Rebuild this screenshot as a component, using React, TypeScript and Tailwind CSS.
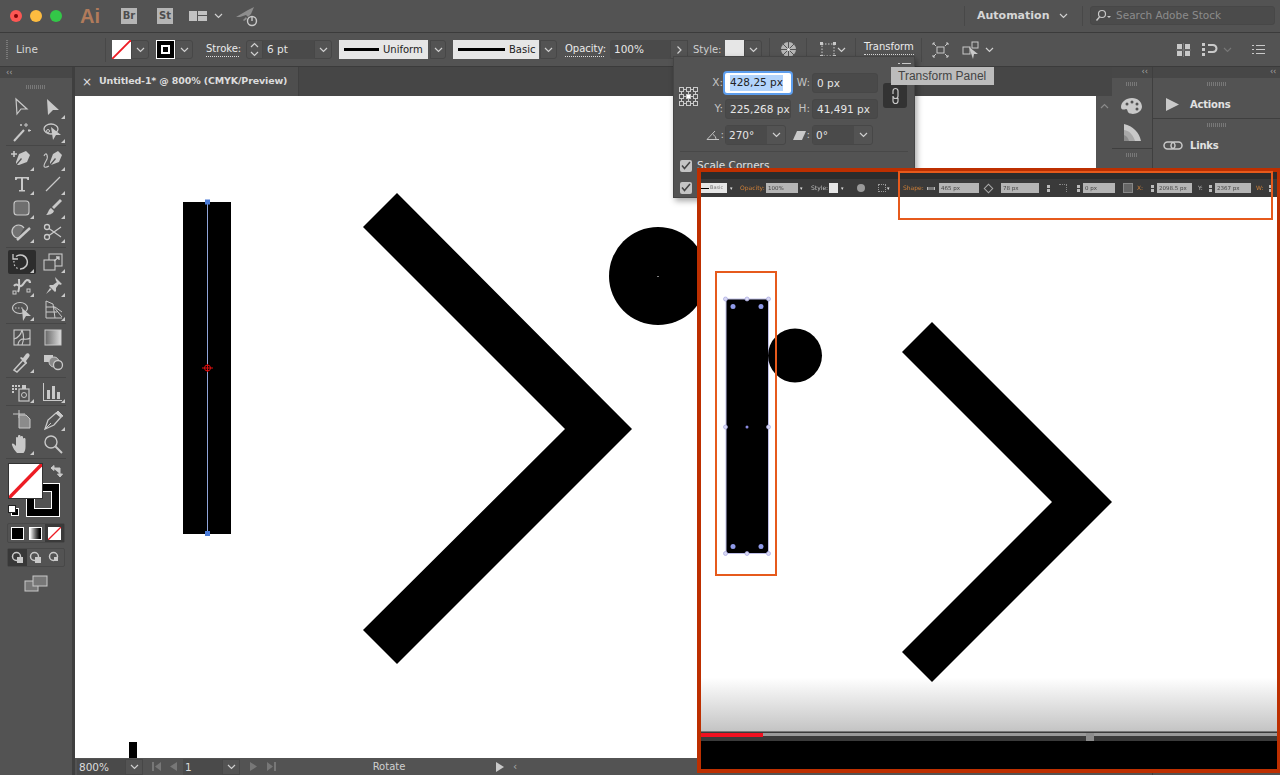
import React from 'react';

const stroke = '#c9c9c9';

const Chev: React.FC<{ c?: string }> = ({ c = '#d0d0d0' }) => (
  <svg width="9" height="6" viewBox="0 0 9 6" className="shrink-0">
    <path d="M1 1l3.5 3.5L8 1" fill="none" stroke={c} strokeWidth="1.2" />
  </svg>
);

const ChevBtn: React.FC<{ w: string }> = ({ w }) => (
  <div className={`${w} h-[19px] shrink-0 flex items-center justify-center rounded-r-[3px] border border-[#474747]`}>
    <Chev />
  </div>
);

const Sep = () => <div className="w-px h-[24px] shrink-0 bg-[#484848]" />;

const Grip: React.FC<{ w?: string }> = ({ w = 'w-[20px]' }) => (
  <div className={`${w} h-[4px] bg-[repeating-linear-gradient(to_right,#787878_0,#787878_1px,transparent_1px,transparent_2px)]`} />
);

const NoneSwatch: React.FC<{ cls: string }> = ({ cls }) => (
  <svg viewBox="0 0 20 20" className={cls} preserveAspectRatio="none">
    <rect width="20" height="20" fill="#fff" />
    <path d="M0 20L20 0" stroke="#ed1c24" strokeWidth="2" />
  </svg>
);

const PanelMenu = () => (
  <svg width="13" height="9" viewBox="0 0 13 9" className="block">
    <path d="M0 .5h2M4 .5h9M0 4.5h2M4 4.5h9M0 8.5h2M4 8.5h9" stroke="#c9c9c9" />
  </svg>
);

const tools: React.ReactNode[][][] = [
  [
    [
      <path d="M6 3l11 10h-6l-4 5z" fill="none" stroke={stroke} strokeWidth="1.2" />,
      <path d="M6 3l12 11h-6l-5 5z" fill={stroke} />,
    ],
    [
      <g stroke={stroke} fill="none"><path d="M4 21L14 10" strokeWidth="2" /><path d="M16 3v4M14 5h4M19 9v3M18 10.5h3M11 4v2M10 5h2" strokeWidth="1" /></g>,
      <g stroke={stroke} fill="none"><ellipse cx="10" cy="9" rx="7" ry="5" strokeWidth="1.3" /><circle cx="7" cy="11" r="1.5" /><path d="M10 7l10 8h-5l-3 5z" fill={stroke} stroke="none" /></g>,
    ],
  ],
  [
    [
      <g><path d="M1 6h6M4 3v6" stroke={stroke} strokeWidth="1.6" /><path d="M16 3l4 4-3 7-8 3-2 0 5-6-1-1-5 6 0-2 3-8z" fill={stroke} /></g>,
      <g><path d="M3 8c2-5 5 0 2 5s-3 8 3 5" fill="none" stroke={stroke} strokeWidth="1.1" /><path d="M17 3l4 4-3 7-8 3 5-6-1-1-5 6 0-2 3-8z" fill={stroke} /></g>,
    ],
    [
      <path d="M5 5h14v3h-1.5l-1-1.5H13V18h2v1.5H9V18h2V6.5H7.5l-1 1.5H5z" fill={stroke} />,
      <path d="M5 19L19 5" stroke={stroke} strokeWidth="1.3" />,
    ],
    [
      <rect x="4" y="5" width="15" height="14" rx="3" fill="#6f6f6f" stroke={stroke} strokeWidth="1.1" />,
      <g><path d="M19 3l2 2-8 8-2-2z" fill={stroke} /><path d="M10 12l3 3c-1 3-5 4-8 4 2-1 2-5 5-7z" fill={stroke} /></g>,
    ],
    [
      <g><path d="M8 18a6.5 6.5 0 1 1 6-10" fill="#727272" stroke={stroke} strokeWidth="1.2" /><path d="M7 20L20 8" stroke={stroke} strokeWidth="2.4" /></g>,
      <g fill="none" stroke={stroke} strokeWidth="1.3"><circle cx="6" cy="7" r="2.5" /><circle cx="6" cy="17" r="2.5" /><path d="M8 8.5L20 17M8 15.5L20 7" /></g>,
    ],
  ],
  [
    [
      <g fill="none" stroke={stroke}><path d="M6 6.5A7 7 0 1 1 10 19" strokeWidth="1.5" /><path d="M3 4v5h5" strokeWidth="1.3" /><path d="M4 11a7 7 0 0 0 5 8" strokeWidth="1.2" strokeDasharray="1.5 2" /></g>,
      <g fill="none" stroke={stroke} strokeWidth="1.1"><rect x="8" y="4" width="13" height="12" /><rect x="3" y="10" width="11" height="10" fill="#535353" /><path d="M13 11l5-4M15 7h3v3" strokeWidth="1.3" /></g>,
    ],
    [
      <g fill="none" stroke={stroke}><path d="M4 12c3-4 4 1 7 0s3-5 6-6c2 0 3 1 3 3" strokeWidth="2.2" /><path d="M9 5c0 5 1 9-1 13" strokeWidth="2" /><rect x="3" y="17" width="3" height="3" strokeWidth="1" /><rect x="17" y="15" width="3" height="3" strokeWidth="1" /></g>,
      <g fill={stroke}><path d="M14 3l7 7-2 1-1-1-3 4 0 3-1 1-6-6 1-1h3l4-3-1-1z" /><path d="M9 14l1.5 1.5L5 20z" /></g>,
    ],
    [
      <g><ellipse cx="10" cy="10" rx="7.5" ry="5.5" fill="none" stroke={stroke} strokeWidth="1.2" /><path d="M5 10h8" stroke={stroke} strokeDasharray="1.5 1.5" /><path d="M12 10l9 8h-5l-3 5z" fill={stroke} /></g>,
      <g fill="none" stroke={stroke} strokeWidth="1"><path d="M5 3v17h16M5 3l7 3 2 14M5 9h9l7 5M5 14h11" /><path d="M12 8l9 11" /></g>,
    ],
  ],
  [
    [
      <g fill="none" stroke={stroke} strokeWidth="1.1"><rect x="4" y="4" width="16" height="15" /><path d="M4 13c4-1 7-5 8-9M12 4c2 5 2 10 0 15M8 19c0-3 2-5 4-6 3 0 6 1 8-1" /></g>,
      <rect x="4" y="4" width="16" height="15" fill="url(#toolgrad)" stroke={stroke} strokeWidth="1" />,
    ],
    [
      <g><path d="M4 21l9-10 3 3-9 9z" fill="none" stroke={stroke} strokeWidth="1.5" transform="translate(0 -1)" /><path d="M13 8l3-4c2-2 5 1 3 3l-3 4 1 2-1 1-6-6 1-1z" fill={stroke} /></g>,
      <g><rect x="3" y="5" width="9" height="7" fill={stroke} /><circle cx="13" cy="12" r="5" fill="#8a8a8a" stroke={stroke} /><circle cx="17" cy="15" r="4.5" fill="#535353" stroke={stroke} strokeWidth="1.3" /></g>,
    ],
  ],
  [
    [
      <g fill={stroke}><path d="M2 5h2v2H2zM5 5h2v2H5zM8 5h2v2H8zM2 8h2v2H2zM5 8h2v2H5zM2 11h2v2H2z" /><rect x="9" y="9" width="10" height="12" fill="none" stroke={stroke} strokeWidth="1.2" /><circle cx="14" cy="15" r="2.5" fill="none" stroke={stroke} /><rect x="12" y="5" width="4" height="4" /></g>,
      <g fill={stroke}><path d="M3 3v17h18v1H2V3z" /><rect x="6" y="10" width="3" height="9" /><rect x="11" y="6" width="3" height="13" /><rect x="16" y="12" width="3" height="7" /></g>,
    ],
  ],
  [
    [
      <g><path d="M9 2v8M3 6h12" stroke={stroke} fill="none" /><path d="M9 7h7l4 4v9H9z" fill="#8b8b8b" stroke={stroke} /></g>,
      <g fill="none" stroke={stroke}><path d="M4 21l3-9 8-7 5 4-7 8z" strokeWidth="1.3" /><path d="M15 5l2-2 5 5-2 1z" fill={stroke} /><path d="M4 21l6-6" /></g>,
    ],
    [
      <path d="M7 21c-2-2-4-5-5-8-.5-1.5 1-2 2-1l2 2V6c0-1.5 2-1.5 2 0v4V4c0-1.5 2.5-1.5 2.5 0v6V5c0-1.5 2.5-1.5 2.5 0v6V7c0-1.5 2.5-1.5 2.5 0v8c0 3-1 5-2 6z" fill={stroke} />,
      <g fill="none" stroke={stroke}><circle cx="10" cy="10" r="6" strokeWidth="1.4" /><path d="M14.5 14.5L21 21" strokeWidth="2" /></g>,
    ],
  ],
];

// tools without the little flyout corner
const noFlag = ['0-0-0', '0-1-0', '3-0-0', '3-0-1', '3-1-1', '5-0-0', '5-1-1'];

const Tool: React.FC<{ children: React.ReactNode; active?: boolean; flag?: boolean }> = ({ children, active, flag = true }) => (
  <div className={`w-[28px] h-[24px] mx-auto flex items-center justify-center rounded-[2px] ${active ? 'bg-[#2d2d2d]' : ''}`}>
    <svg width="24" height="24" viewBox="0 0 24 24">
      {children}
      {flag && <path d="M24 23h-4l4-4z" fill={stroke} />}
    </svg>
  </div>
);

const seps = ['mt-px mb-[2px]', 'mt-[3px] mb-[2px]', 'mt-px mb-[2px]', 'mt-[3px] mb-[2px]', 'mt-px mb-[2px]', 'mt-[2px]'];

const Toolbar = () => (
  <div className="w-[75px] shrink-0 flex flex-col border-r-[3px] border-[#3f3f3f] bg-[#535353]">
    <div className="h-[11px] flex items-center pl-[6px] bg-[#474747] text-[8px] leading-none text-[#aaa]">‹‹</div>
    <div className="h-[18px] flex items-center justify-center"><Grip /></div>
    {tools.map((group, i) => (
      <React.Fragment key={i}>
        {group.map((row, j) => (
          <div key={j} className="grid grid-cols-[31px_31px] pl-[6px]">
            {row.map((t, k) => (
              <Tool key={k} active={i === 2 && j === 0 && k === 0} flag={!noFlag.includes(`${i}-${j}-${k}`)}>{t}</Tool>
            ))}
          </div>
        ))}
        <div className={`${seps[i]} h-px mx-[6px] bg-[#464646]`} />
      </React.Fragment>
    ))}

    <div className="relative h-[55px] mt-[4px] shrink-0">
      <div className="absolute left-[26px] top-[20px] w-[34px] h-[34px] bg-black border border-white p-[7px]">
        <div className="w-full h-full bg-[#535353] border border-white" />
      </div>
      <NoneSwatch cls="absolute left-[8px] top-0 w-[35px] h-[36px] border border-[#333]" />
      <svg className="absolute left-[50px] top-[1px]" width="14" height="14" viewBox="0 0 14 14">
        <path d="M3 4h7v6M1 4l3-2.5v5zM10 13l-2.5-3h5z" fill={stroke} stroke={stroke} strokeWidth="1" />
      </svg>
      <div className="absolute left-[11px] top-[45px] w-[8px] h-[8px] bg-black border border-white" />
      <div className="absolute left-[8px] top-[42px] w-[8px] h-[8px] bg-white border border-[#222]" />
    </div>

    <div className="mt-[5px] mx-[7px] h-[20px] grid grid-cols-3 rounded-[2px] border border-[#484848]">
      <div className="flex items-center justify-center"><div className="w-[13px] h-[13px] bg-black border border-white" /></div>
      <div className="flex items-center justify-center"><div className="w-[13px] h-[13px] bg-linear-to-r from-white to-black border border-white" /></div>
      <div className="flex items-center justify-center bg-[#3a3a3a]"><NoneSwatch cls="w-[13px] h-[13px]" /></div>
    </div>

    <div className="mt-[5px] mx-[7px] h-[19px] grid grid-cols-3 rounded-[2px] border border-[#484848]">
      {[0, 1, 2].map(i => (
        <div key={i} className={`flex items-center justify-center ${i === 0 ? 'bg-[#383838]' : ''}`}>
          <svg width="13" height="13" viewBox="0 0 13 13">
            <circle cx="5.5" cy="5.5" r="4" fill="none" stroke={stroke} strokeWidth="1.5" />
            <rect x="6" y="6" width={i === 2 ? 4 : 6} height={i === 2 ? 4 : 6} fill={stroke} />
          </svg>
        </div>
      ))}
    </div>

    <div className="mt-[8px] flex justify-center">
      <svg width="24" height="17" viewBox="0 0 24 17">
        <rect x="1" y="6" width="13" height="10" fill="#777" stroke={stroke} />
        <rect x="9" y="1" width="14" height="10" fill="#777" stroke={stroke} />
      </svg>
    </div>
  </div>
);

const TitleBar = () => (
  <div className="h-[33px] shrink-0 flex items-center border-b border-[#3b3b3b] bg-[#535353] pb-px">
    <div className="ml-[10px] w-[12px] h-[12px] rounded-full bg-[#fc5753] flex items-center justify-center"><div className="w-[4px] h-[4px] rounded-full bg-[#7e0508]" /></div>
    <div className="ml-[8px] w-[12px] h-[12px] rounded-full bg-[#fdbc40]" />
    <div className="ml-[8px] w-[12px] h-[12px] rounded-full bg-[#33c748]" />
    <span className="ml-[18px] w-[22px] text-[20px] leading-none font-bold text-[#b17b5b] font-['Liberation_Sans',sans-serif]">Ai</span>
    <div className="ml-[19px] w-[16px] h-[16px] bg-[#b5b5b5] text-[#4d4d4d] text-[10px] font-bold flex items-center justify-center">Br</div>
    <div className="ml-[20px] w-[16px] h-[16px] bg-[#b5b5b5] text-[#4d4d4d] text-[10px] font-bold flex items-center justify-center">St</div>
    <svg className="ml-[16px]" width="18" height="12" viewBox="0 0 18 12"><path d="M0 1h8v10H0zM9 1h9v4H9zM9 6h9v5H9z" fill="#c2c2c2" /></svg>
    <div className="ml-[7px]"><Chev /></div>
    <svg className="ml-[12px]" width="24" height="24" viewBox="0 0 24 24">
      <path d="M1 13L13 6l6-3-3 7-3 3-2-2-3 1-3 1zM8 16l3-3 1 2-3 2z" fill="#8d8d8d" />
      <circle cx="17" cy="17" r="4.5" fill="#535353" stroke="#c9c9c9" strokeWidth="1.4" />
      <path d="M17 12v5" stroke="#c9c9c9" strokeWidth="1.4" />
    </svg>
    <div className="ml-auto w-px h-[20px] bg-[#484848]" />
    <span className="ml-[12px] mt-px w-[73px] text-[11px] font-bold text-[#d6d6d6] whitespace-nowrap">Automation</span>
    <div className="ml-[9px]"><Chev /></div>
    <div className="ml-[14px] w-px h-[20px] bg-[#484848]" />
    <div className="ml-[7px] mr-[5px] w-[185px] h-[19px] flex items-center rounded-[3px] border border-[#474747] bg-[#4b4b4b] pl-[4px]">
      <svg width="17" height="13" viewBox="0 0 17 13"><circle cx="7" cy="5" r="3.5" fill="none" stroke="#c9c9c9" strokeWidth="1.2" /><path d="M4.5 8L1.5 11.5" stroke="#c9c9c9" strokeWidth="1.4" /><path d="M12 7h4l-2 2z" fill="#c9c9c9" /></svg>
      <span className="ml-[4px] text-[10.5px] text-[#8b8b8b] whitespace-nowrap">Search Adobe Stock</span>
    </div>
  </div>
);

const OptionLabel: React.FC<{ w: string; ml: string; children: React.ReactNode }> = ({ w, ml, children }) => (
  <span className={`${w} ${ml} shrink-0 text-[10px] leading-[14px] text-[#ececec] whitespace-nowrap border-b border-dotted border-[#dcdcdc]`}>{children}</span>
);

const OptionsBar = () => (
  <div className="h-[34px] shrink-0 flex items-center border-b border-[#3b3b3b] bg-[#535353]">
    <div className="ml-[6px] w-[2px] h-[20px] bg-[repeating-linear-gradient(to_bottom,#7a7a7a_0,#7a7a7a_1px,transparent_1px,transparent_2px)]" />
    <span className="ml-[8px] w-[89px] text-[10.5px] text-[#d6d6d6]">Line</span>
    <Sep />
    <NoneSwatch cls="ml-[6px] w-[19px] h-[19px] shrink-0" />
    <ChevBtn w="w-[18px]" />
    <div className="ml-[7px] w-[19px] h-[19px] shrink-0 bg-black border border-white flex items-center justify-center">
      <div className="w-[9px] h-[9px] border-2 border-white flex" />
    </div>
    <ChevBtn w="w-[18px]" />
    <OptionLabel w="w-[33px]" ml="ml-[13px]">Stroke:</OptionLabel>
    <div className="ml-[7px] w-[17px] h-[19px] shrink-0 flex flex-col items-center justify-center gap-[3px] rounded-l-[3px] border border-[#474747]">
      <div className="rotate-180"><Chev /></div>
      <Chev />
    </div>
    <div className="w-[51px] h-[19px] shrink-0 bg-[#4a4a4a] text-[10.5px] leading-[18px] pl-[4px] text-[#e6e6e6]">6 pt</div>
    <ChevBtn w="w-[18px]" />
    <div className="ml-[7px] w-[89px] h-[19px] shrink-0 bg-[#e6e6e6] flex items-center pl-[5px] gap-[4px] text-[10px] text-[#222]">
      <div className="w-[35px] h-[3px] bg-black" />Uniform
    </div>
    <div className="ml-[2px]"><ChevBtn w="w-[16px]" /></div>
    <div className="ml-[7px] w-[86px] h-[19px] shrink-0 bg-[#e6e6e6] flex items-center pl-[5px] gap-[4px] text-[10px] text-[#222]">
      <div className="w-[47px] h-[3px] bg-black" />Basic
    </div>
    <div className="ml-px"><ChevBtn w="w-[17px]" /></div>
    <OptionLabel w="w-[39px]" ml="ml-[8px]">Opacity:</OptionLabel>
    <div className="ml-[6px] w-[60px] h-[19px] shrink-0 rounded-l-[3px] bg-[#4a4a4a] text-[10.5px] leading-[18px] pl-[4px] text-[#e6e6e6]">100%</div>
    <div className="w-[18px] h-[19px] shrink-0 flex items-center justify-center border border-[#474747]"><div className="-rotate-90"><Chev /></div></div>
    <span className="ml-[5px] w-[25px] shrink-0 text-[10px] text-[#cfcfcf]">Style:</span>
    <div className="ml-[7px] w-[19px] h-[19px] shrink-0 bg-[#e6e6e6]" />
    <ChevBtn w="w-[18px]" />
    <div className="ml-[7px]"><Sep /></div>
    <svg className="ml-[10px] shrink-0" width="17" height="17" viewBox="0 0 17 17">
      <circle cx="8.5" cy="8.5" r="7.5" fill="#b5b5b5" />
      <path d="M8.5 1v15M1 8.5h15M3 3l11 11M14 3L3 14" stroke="#535353" />
      <circle cx="8.5" cy="8.5" r="1.5" fill="#e8e8e8" />
    </svg>
    <div className="ml-[9px]"><Sep /></div>
    <svg className="ml-[13px] shrink-0" width="16" height="16" viewBox="0 0 16 16">
      <rect x="2" y="2" width="12" height="12" fill="none" stroke="#c9c9c9" strokeDasharray="1.5 1.5" />
      <path d="M0 0h3v3H0zM13 0h3v3h-3zM0 13h3v3H0zM13 13h3v3h-3z" fill="#c9c9c9" />
    </svg>
    <div className="ml-px w-[9px]"><Chev /></div>
    <div className="ml-[9px]"><Sep /></div>
    <OptionLabel w="w-[50px]" ml="ml-[8px] mb-[4px]">Transform</OptionLabel>
    <div className="ml-[7px]"><Sep /></div>
    <svg className="ml-[10px] shrink-0" width="17" height="16" viewBox="0 0 17 16">
      <rect x="5" y="5" width="7" height="6" fill="none" stroke="#c9c9c9" />
      <path d="M1 1l3 3M16 1l-3 3M1 15l3-3M16 15l-3-3M1 3V1h2M16 3V1h-2M1 13v2h2M16 13v2h-2" fill="none" stroke="#c9c9c9" />
    </svg>
    <svg className="ml-[13px] shrink-0" width="18" height="18" viewBox="0 0 18 18">
      <rect x="1" y="6" width="7" height="7" fill="none" stroke="#c9c9c9" />
      <rect x="10" y="1" width="6" height="6" fill="none" stroke="#c9c9c9" />
      <path d="M7 6l9 7h-4l-1 5z" fill="#c9c9c9" />
    </svg>
    <div className="ml-[5px] w-[9px]"><Chev /></div>

    <svg className="ml-auto shrink-0" width="15" height="14" viewBox="0 0 15 14"><path d="M1 1h5v5H1zM9 1h5v5H9zM1 8h5v5H1zM9 8h5v5H9z" fill="#c9c9c9" /><path d="M7.5 0v14M0 7h15" stroke="#777" /></svg>
    <svg className="ml-[11px] shrink-0" width="16" height="14" viewBox="0 0 16 14"><path d="M0 0h3v3H0zM0 5h3v3H0zM0 10h3v3H0z" fill="#c9c9c9" /><path d="M6 2h5a3 3 0 0 1 0 7H6" fill="none" stroke="#c9c9c9" strokeWidth="2" /></svg>
    <div className="ml-[5px] w-[9px]"><Chev c="#777" /></div>
    <div className="ml-[20px] mr-[15px] w-[13px]"><PanelMenu /></div>
  </div>
);

const TabStrip = () => (
  <div className="h-[29px] shrink-0 flex bg-[#464646]">
    <div className="w-[224px] flex items-center bg-[#4e4e4e] border-r border-[#404040] pl-[7px]">
      <span className="w-[17px] text-[12px] leading-none text-[#e0e0e0]">×</span>
      <span className="text-[9.5px] font-bold tracking-[-0.15px] text-[#dcdcdc] whitespace-nowrap">Untitled-1* @ 800% (CMYK/Preview)</span>
    </div>
  </div>
);

const Canvas = () => (
  <div className="flex-1 flex min-h-0">
    <div className="w-[1021px] bg-white">
      <svg width="1021" height="662" viewBox="75 96 1021 662" className="block">
        <defs>
          <linearGradient id="toolgrad" x1="0" x2="1" y1="0" y2="0"><stop offset="0" stopColor="#666" /><stop offset="1" stopColor="#ddd" /></linearGradient>
        </defs>
        <rect x="183" y="202" width="48" height="332" fill="#000" />
        <path d="M207.5 202v332" stroke="#8fa4d8" strokeWidth="1" />
        <rect x="205" y="199.5" width="5" height="5" fill="#4a7bd8" />
        <rect x="205" y="531" width="5" height="5" fill="#4a7bd8" />
        <g stroke="#e01010" fill="none">
          <path d="M202 368h11M207.5 364v8" />
          <circle cx="207.5" cy="368" r="3" />
        </g>
        <path d="M397 193L632 429 397 664 363 630 565 429 363 227z" fill="#000" />
        <circle cx="658" cy="276" r="49" fill="#000" />
        <rect x="657.5" y="276" width="1" height="1" fill="#fff" />
        <rect x="129" y="742" width="8" height="16" fill="#000" />
      </svg>
    </div>
    <div className="w-[16px] bg-[#535353] flex justify-center pt-[7px]">
      <div className="rotate-180 h-fit"><Chev c="#8a8a8a" /></div>
    </div>
  </div>
);

const StatusBar = () => (
  <div className="h-[17px] shrink-0 flex items-center bg-[#535353] text-[10.5px] text-[#dcdcdc]">
    <div className="ml-[2px] w-[48px] h-[16px] bg-[#4a4a4a] pl-[2px] leading-[16px]">800%</div>
    <div className="w-[18px] h-[16px] flex items-center justify-center border border-[#474747]"><Chev /></div>
    <svg className="ml-[9px]" width="27" height="9" viewBox="0 0 27 9"><path d="M0 0h2v9H0zM9 0v9L3 4.5zM25 0v9l-7-4.5z" fill="#777" /></svg>
    <div className="ml-[4px] w-[39px] h-[16px] bg-[#4a4a4a] pl-[2px] leading-[16px]">1</div>
    <div className="w-[18px] h-[16px] flex items-center justify-center border border-[#474747]"><Chev /></div>
    <svg className="ml-[10px]" width="26" height="9" viewBox="0 0 26 9"><path d="M0 0v9l7-4.5zM17 0v9l6-4.5zM24 0h2v9h-2z" fill="#777" /></svg>
    <span className="ml-[14px] w-[198px] text-center text-[10px] text-[#cfcfcf]">Rotate</span>
    <svg className="ml-[8px]" width="8" height="10" viewBox="0 0 8 10"><path d="M0 0v10l8-5z" fill="#c9c9c9" /></svg>
    <span className="ml-[9px] text-[#aaa]">‹</span>
  </div>
);

const Docks = () => (
  <div className="flex-1 flex bg-[#535353]">
    <div className="w-[41px] shrink-0 flex flex-col border-r border-[#3f3f3f]">
      <div className="h-[11px] bg-[#474747] text-[8px] leading-[10px] text-right pr-[4px] text-[#aaa]">‹‹</div>
      <div className="h-[12px] flex items-center justify-center"><Grip w="w-[12px]" /></div>
      <div className="flex flex-col items-center gap-[9px] pt-[7px] pb-[6px] border-b border-[#3f3f3f]">
        <svg width="22" height="18" viewBox="0 0 22 18"><path d="M11 1C5 1 0 5 0 10c0 3 3 3 5 2 2 0 1 3 3 4 3 2 12 1 13-6 0-5-4-9-10-9z" fill="#c9c9c9" /><circle cx="6" cy="7" r="1.5" fill="#535353" /><circle cx="11" cy="5" r="1.5" fill="#535353" /><circle cx="16" cy="7" r="1.5" fill="#535353" /><circle cx="16" cy="12" r="1.5" fill="#535353" /></svg>
        <svg width="18" height="18" viewBox="0 0 18 18"><path d="M1 0c9 2 15 8 17 17H1z" fill="#c9c9c9" /><path d="M1 6c6 1 9 5 11 11H1z" fill="#a8a8a8" /><path d="M1 11c3 1 4 3 5 6H1z" fill="#8b8b8b" /></svg>
      </div>
      <div className="h-[12px] flex items-center justify-center"><Grip w="w-[12px]" /></div>
    </div>
    <div className="flex-1 flex flex-col text-[10px] font-bold tracking-[-0.2px] text-[#e2e2e2]">
      <div className="h-[11px] bg-[#474747] text-[8px] font-normal leading-[10px] text-right pr-[4px] text-[#aaa]">‹‹</div>
      <div className="h-[12px] flex items-center justify-center"><Grip w="w-[20px]" /></div>
      <div className="h-[29px] flex items-center pl-[13px] gap-[11px] border-b border-[#3f3f3f]">
        <svg width="13" height="13" viewBox="0 0 13 13"><path d="M0 0v13l13-6.5z" fill="#c9c9c9" /></svg>Actions
      </div>
      <div className="h-[12px] flex items-center justify-center"><Grip w="w-[20px]" /></div>
      <div className="h-[29px] flex items-center pl-[10px] gap-[7px]">
        <svg width="20" height="9" viewBox="0 0 20 9"><rect x="1" y="1" width="11" height="7" rx="3.5" fill="none" stroke="#c9c9c9" strokeWidth="1.5" /><rect x="8" y="1" width="11" height="7" rx="3.5" fill="none" stroke="#c9c9c9" strokeWidth="1.5" /></svg>Links
      </div>
    </div>
  </div>
);

const Input: React.FC<{ children: React.ReactNode; selected?: boolean }> = ({ children, selected }) => (
  selected ? (
    <div className="w-[66px] h-[20px] shrink-0 rounded-[2px] bg-white ring-2 ring-[#5c9ded] pl-[5px] flex items-center text-[10.5px] text-[#222]">
      <span className="bg-[#b3d4fc] whitespace-nowrap">{children}</span>
    </div>
  ) : (
    <div className="w-[66px] h-[20px] shrink-0 rounded-[3px] border border-[#474747] bg-[#4a4a4a] pl-[4px] leading-[18px] text-[10.5px] text-[#e6e6e6] whitespace-nowrap">{children}</div>
  )
);

const Drop: React.FC<{ children: React.ReactNode }> = ({ children }) => (
  <div className="w-[61px] h-[20px] shrink-0 flex rounded-[3px] border border-[#474747] text-[10.5px] text-[#e6e6e6]">
    <div className="flex-1 bg-[#4a4a4a] pl-[3px] leading-[18px]">{children}</div>
    <div className="w-[18px] flex items-center justify-center"><Chev /></div>
  </div>
);

const Check = () => (
  <div className="w-[12px] h-[12px] shrink-0 rounded-[2px] bg-[#c4c4c4] flex items-center justify-center">
    <svg width="10" height="9" viewBox="0 0 10 9"><path d="M1 4.5L3.5 7.5 9 1" fill="none" stroke="#444" strokeWidth="1.5" /></svg>
  </div>
);

const FLabel: React.FC<{ w: string; children: React.ReactNode }> = ({ w, children }) => (
  <span className={`${w} shrink-0 text-right pr-[2px] text-[10.5px] text-[#c4c4c4]`}>{children}</span>
);

const TransformPanel = () => (
  <div className="absolute left-[673px] top-[56px] w-[242px] h-[142px] bg-[#535353] border border-[#454545] shadow-[2px_3px_6px_rgba(0,0,0,0.35)]">
    <div className="flex justify-end pr-[3px] pt-[6px] h-[16px]"><PanelMenu /></div>
    <div className="flex">
      <div className="w-[36px] pl-[5px] pt-[14px] shrink-0">
        <svg width="19" height="19" viewBox="0 0 19 19" className="block">
          {[0, 7, 14].flatMap(y => [0, 7, 14].map(x => (
            <rect key={`${x}-${y}`} x={x + 0.5} y={y + 0.5} width="4" height="4" fill={x === 7 && y === 7 ? '#fff' : 'none'} stroke="#c9c9c9" />
          )))}
          <path d="M5 2.5h2M12 2.5h2M5 9.5h2M12 9.5h2M5 16.5h2M12 16.5h2M2.5 5v2M2.5 12v2M9.5 5v2M9.5 12v2M16.5 5v2M16.5 12v2" stroke="#c9c9c9" />
        </svg>
      </div>
      <div className="flex flex-col gap-[6px] shrink-0">
        <div className="flex items-center"><FLabel w="w-[15px]">X:</FLabel><Input selected>428,25 px</Input><FLabel w="w-[21px]">W:</FLabel><Input>0 px</Input></div>
        <div className="flex items-center"><FLabel w="w-[15px]">Y:</FLabel><Input>225,268 px</Input><FLabel w="w-[21px]">H:</FLabel><Input>41,491 px</Input></div>
        <div className="flex items-center">
          <div className="w-[15px] shrink-0 flex justify-end pr-[1px] items-center text-[10.5px] text-[#c4c4c4]">
            <svg className="shrink-0 -ml-[3px]" width="14" height="10" viewBox="0 0 14 10"><path d="M1 9.5h12M1 9.5L9 1M7 4.5c2 1 3 3 3 5" fill="none" stroke="#c4c4c4" /></svg>:
          </div>
          <Drop>270°</Drop>
          <div className="w-[26px] shrink-0 flex justify-end pr-[2px] items-center text-[10.5px] text-[#c4c4c4]">
            <svg width="13" height="9" viewBox="0 0 13 9"><path d="M0 9h9l4-9H4z" fill="#c9c9c9" /></svg>:
          </div>
          <Drop>0°</Drop>
        </div>
      </div>
      <div className="ml-[5px] mt-[10px] w-[24px] h-[25px] shrink-0 rounded-[3px] bg-[#333] flex items-center justify-center">
        <svg width="9" height="18" viewBox="0 0 9 18"><path d="M2 7V4a2.5 2.5 0 0 1 5 0v5a2.5 2.5 0 0 1-5 0M7 11v3a2.5 2.5 0 0 1-5 0V9" fill="none" stroke="#c9c9c9" strokeWidth="1.2" /></svg>
      </div>
    </div>
    <div className="mx-[6px] mt-[6px] h-px bg-[#484848]" />
    <div className="pl-[6px] pt-[6px] flex items-center gap-[5px] text-[10.5px] text-[#e0e0e0]"><Check />Scale Corners</div>
    <div className="pl-[6px] pt-[8px]"><Check /></div>
  </div>
);

const MiniChev = () => <span className="block w-[5px] text-[5px] leading-none text-[#ddd]">▾</span>;
const MiniStep = () => (
  <div className="w-[3px] shrink-0 flex flex-col gap-px">
    <div className="w-[3px] h-[3px] bg-[#bbb]" />
    <div className="w-[3px] h-[3px] bg-[#bbb]" />
  </div>
);
const MiniInput: React.FC<{ w: string; ml: string; children: React.ReactNode }> = ({ w, ml, children }) => (
  <div className={`${w} ${ml} shrink-0 h-[10px] bg-[#b5b5b5] pl-[2px] text-[5.5px] leading-[10px] text-[#444] whitespace-nowrap`}>{children}</div>
);
const MiniLabel: React.FC<{ w: string; ml: string; orange?: boolean; children: React.ReactNode }> = ({ w, ml, orange, children }) => (
  <span className={`${w} ${ml} shrink-0 text-[6px] leading-none whitespace-nowrap ${orange ? 'text-[#d08038]' : 'text-[#bdbdbd]'}`}>{children}</span>
);

const VideoInset = () => (
  <div className="absolute left-[697px] top-[168px] w-[583px] h-[605px] flex flex-col border-4 border-r-[3px] border-[#bd2f00]">
    <div className="h-[25px] shrink-0 bg-[#3a3a3a] border-t-[7px] border-[#2c2c2c] flex items-center blur-[0.4px]">
      <div className="w-[26px] h-[10px] shrink-0 bg-[#e6e6e6] flex items-center text-[5px] text-[#777]"><div className="w-[8px] h-px bg-black mr-px" />Basic</div>
      <div className="ml-[3px]"><MiniChev /></div>
      <MiniLabel w="w-[22px]" ml="ml-[5px]" orange>Opacity:</MiniLabel>
      <MiniInput w="w-[32px]" ml="ml-[4px]">100%</MiniInput>
      <div className="ml-[2px]"><MiniChev /></div>
      <MiniLabel w="w-[14px]" ml="ml-[6px]">Style:</MiniLabel>
      <div className="ml-[4px] w-[9px] h-[10px] shrink-0 bg-[#e6e6e6]" />
      <div className="ml-[3px]"><MiniChev /></div>
      <div className="ml-[11px] w-[8px] h-[8px] shrink-0 rounded-full bg-[#9a9a9a]" />
      <div className="ml-[13px] w-[8px] h-[8px] shrink-0 border border-dotted border-[#999]" />
      <div className="ml-px"><MiniChev /></div>
      <MiniLabel w="w-[16px]" ml="ml-[11px]" orange>Shape:</MiniLabel>
      <div className="ml-[8px] w-[8px] h-[3px] shrink-0 border-x border-[#bbb] bg-[#777]" />
      <MiniInput w="w-[40px]" ml="ml-[4px]">465 px</MiniInput>
      <div className="ml-[6px] w-[7px] h-[7px] shrink-0 rotate-45 border border-[#aaa]" />
      <MiniInput w="w-[38px]" ml="ml-[9px]">78 px</MiniInput>
      <div className="ml-[8px]"><MiniStep /></div>
      <div className="ml-[9px] w-[8px] h-[8px] shrink-0 border-t border-r border-dotted border-[#888]" />
      <div className="ml-[10px]"><MiniStep /></div>
      <MiniInput w="w-[32px]" ml="ml-[3px]">0 px</MiniInput>
      <div className="ml-[8px] w-[10px] h-[10px] shrink-0 bg-[#666] border border-[#888]" />
      <MiniLabel w="w-[6px]" ml="ml-[4px]" orange>X:</MiniLabel>
      <div className="ml-[8px]"><MiniStep /></div>
      <MiniInput w="w-[35px]" ml="ml-[3px]">2098.5 px</MiniInput>
      <MiniLabel w="w-[6px]" ml="ml-[6px]">Y:</MiniLabel>
      <div className="ml-[5px]"><MiniStep /></div>
      <MiniInput w="w-[36px]" ml="ml-[3px]">2367 px</MiniInput>
      <MiniLabel w="w-[6px]" ml="ml-[5px]" orange>W:</MiniLabel>
      <div className="ml-[7px]"><MiniStep /></div>
    </div>
    <div className="flex-1 min-h-0 bg-[linear-gradient(to_bottom,#fff_0,#fff_90%,#c4c4c4_100%)]">
      <svg width="576" height="534" viewBox="701 197 576 534" className="block">
        <rect x="726" y="299" width="42.5" height="254.5" fill="#000" stroke="#bdbde6" />
        <circle cx="795" cy="355.5" r="27" fill="#000" />
        <path d="M932 322L1112 502 932 682 902 652 1052 502 902 352z" fill="#000" />
        {[[725.5, 299], [747, 299], [768.5, 299], [725.5, 427], [768.5, 427], [725.5, 553.5], [747, 553.5], [768.5, 553.5]].map(([x, y], i) => (
          <circle key={i} cx={x} cy={y} r="2" fill="#d8d8f4" stroke="#a8a8e0" strokeWidth="0.7" />
        ))}
        <circle cx="747" cy="427" r="1.5" fill="#8a8ae0" />
        {[[733, 306.5], [761, 306.5], [733, 546.5], [761, 546.5]].map(([x, y], i) => (
          <circle key={i} cx={x} cy={y} r="2.5" fill="#8f9ae8" />
        ))}
      </svg>
    </div>
    <div className="h-[10px] shrink-0 bg-[#3a3a3a] border-t border-[#777] pt-px">
      <div className="flex items-start h-[4px]">
        <div className="w-[62px] h-[4px] bg-[#f01020]" />
        <div className="flex-1 h-[3px] bg-[#9a9a9a]" />
      </div>
    </div>
    <div className="h-[28px] shrink-0 bg-black" />
  </div>
);

export default function App() {
  return (
    <div className="relative w-[1280px] h-[775px] overflow-hidden flex flex-col bg-[#535353] font-['DejaVu_Sans',sans-serif]">
      <TitleBar />
      <OptionsBar />
      <div className="flex-1 flex min-h-0">
        <Toolbar />
        <div className="w-[1037px] shrink-0 flex flex-col">
          <TabStrip />
          <Canvas />
          <StatusBar />
        </div>
        <Docks />
      </div>

      <TransformPanel />
      <div className="absolute left-[891px] top-[67px] w-[103px] h-[18px] bg-[#bcbcbc] pl-[7px] text-[12px] leading-[18px] text-[#444] font-['Liberation_Sans',sans-serif]">Transform Panel</div>
      <VideoInset />
      <div className="absolute left-[1086px] top-[733px] w-[8px] h-[8px] bg-[#8c8c8c]" />
      <div className="absolute left-[898px] top-[171px] w-[375px] h-[49px] border-2 border-[#e65a1c]" />
      <div className="absolute left-[715px] top-[271px] w-[62px] h-[305px] border-2 border-[#e65a1c]" />
    </div>
  );
}
